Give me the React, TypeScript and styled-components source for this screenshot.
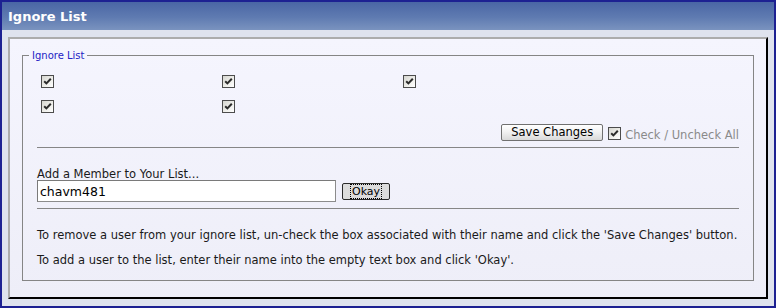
import * as React from 'react';
import styled, { createGlobalStyle } from 'styled-components';

const GlobalStyle = createGlobalStyle`
    html, body {
        margin: 0;
        padding: 0;
        background: #dfe3ee;
    }
    * {
        box-sizing: border-box;
    }
`;

const Frame = styled.div`
    width: 776px;
    height: 308px;
    border: 2px solid #1d2192;
    background: #dfe3ee;
    display: flex;
    flex-direction: column;
    font-family: "DejaVu Sans", Verdana, sans-serif;
    overflow: hidden;
`;

const Header = styled.div`
    height: 28px;
    flex: none;
    padding: 7px 6px 0;
    background: linear-gradient(to bottom, #4a66a5 0%, #5f7bb1 55%, #7a93bf 100%);
    color: #ffffff;
    font-weight: bold;
    font-size: 13px;
    line-height: 15px;
`;

const Body = styled.div`
    padding: 7px 6px;
    flex: 1;
    display: flex;
    min-height: 0;
`;

const Panel = styled.div`
    flex: 1;
    min-width: 0;
    border-style: solid;
    border-width: 2px;
    border-color: #acacac #000000 #000000 #acacac;
    background: linear-gradient(to bottom, #f5f5fe 0%, #eeeef8 100%);
    padding: 10px 12px 17px;
`;

const Fieldset = styled.fieldset`
    margin: 0;
    min-width: 0;
    border: 1px solid #858585;
    padding: 0 6px 13px;
`;

const Legend = styled.legend`
    padding: 0 3px;
    font-size: 10px;
    line-height: 13px;
    color: #2323c4;
`;

const Content = styled.div`
    margin: 0 8px;
    display: flex;
    flex-direction: column;
`;

const CheckGrid = styled.div`
    margin: 13px 0 0 4px;
    display: grid;
    grid-template-columns: repeat(3, 181px);
    grid-auto-rows: 13px;
    row-gap: 12px;
`;

const Box = styled.span`
    display: inline-flex;
    align-items: center;
    justify-content: center;
    width: 13px;
    height: 13px;
    border: 1px solid #4c4c4c;
    background: linear-gradient(135deg, #d6d6d0 0%, #f0f0ec 60%, #ffffff 100%);
    flex: none;
`;

const Actions = styled.div`
    margin-top: 11px;
    display: flex;
    justify-content: flex-end;
    align-items: flex-end;
    height: 17px;
`;

const Button = styled.button<{ $focused?: boolean }>`
    height: 17px;
    padding: 0 ${(p) => (p.$focused ? '7px' : '9px')};
    font-family: "DejaVu Sans", Verdana, sans-serif;
    font-size: ${(p) => (p.$focused ? '11px' : '11.5px')};
    line-height: 15px;
    color: #000;
    border: 1px solid ${(p) => (p.$focused ? '#2a2a2a' : '#707070')};
    border-radius: 2px;
    background: ${(p) => (p.$focused
        ? '#dcdcdc'
        : 'linear-gradient(to bottom, #ffffff 0%, #f2f2f2 45%, #d9d9d9 100%)')};
    display: flex;
    align-items: center;
    justify-content: center;
`;

const FocusRing = styled.span`
    border: 1px dotted #000;
    padding: 0 1px;
    line-height: 13px;
`;

const AllToggle = styled.div`
    display: flex;
    align-items: flex-end;
    margin-left: 5px;
    gap: 4px;
    padding-bottom: 1px;
`;

const AllLabel = styled.span`
    font-size: 11.5px;
    line-height: 13px;
    color: #8a8a8a;
    margin-bottom: -2px;
`;

const Rule = styled.div<{ $top: number }>`
    margin-top: ${(p) => p.$top}px;
    border-top: 1px solid #868686;
`;

const FieldLabel = styled.div`
    margin-top: 20px;
    font-size: 11.5px;
    line-height: 12px;
    color: #1a1a1a;
`;

const InputRow = styled.div`
    display: flex;
    align-items: center;
    gap: 6px;
`;

const TextInput = styled.input`
    width: 299px;
    height: 22px;
    border: 1px solid #8c8c8c;
    border-top-color: #7a7a7a;
    border-left-color: #7a7a7a;
    padding: 0 2px;
    font-family: "DejaVu Sans", Verdana, sans-serif;
    font-size: 12.5px;
    color: #000;
    background: #fff;
    outline: none;
`;

const Note = styled.p<{ $top: number }>`
    margin: ${(p) => p.$top}px 0 0;
    font-size: 11.5px;
    line-height: 14px;
    color: #1a1a1a;
    white-space: nowrap;
`;

const Check = () => (
    <Box>
        <svg width="9" height="9" viewBox="0 0 9 9">
            <polyline points="1.2,4.2 3.4,6.4 7.8,1.8" fill="none" stroke="#2b2b2b" strokeWidth="2" />
        </svg>
    </Box>
);

const ignored = [0, 1, 2, 3, 4];

const App = () => {
    return (
        <>
            <GlobalStyle />
            <Frame>
                <Header>Ignore List</Header>
                <Body>
                    <Panel>
                        <Fieldset>
                            <Legend>Ignore List</Legend>
                            <Content>
                                <CheckGrid>
                                    {ignored.map((val: number) => (
                                        <Check key={val} />
                                    ))}
                                </CheckGrid>
                                <Actions>
                                    <Button>Save Changes</Button>
                                    <AllToggle>
                                        <Check />
                                        <AllLabel>Check / Uncheck All</AllLabel>
                                    </AllToggle>
                                </Actions>
                                <Rule $top={6} />
                                <FieldLabel>Add a Member to Your List...</FieldLabel>
                                <InputRow>
                                    <TextInput defaultValue="chavm481" />
                                    <Button $focused>
                                        <FocusRing>Okay</FocusRing>
                                    </Button>
                                </InputRow>
                                <Rule $top={6} />
                                <Note $top={19}>
                                    To remove a user from your ignore list, un-check the box associated with their name and click the 'Save Changes' button.
                                </Note>
                                <Note $top={11}>
                                    To add a user to the list, enter their name into the empty text box and click 'Okay'.
                                </Note>
                            </Content>
                        </Fieldset>
                    </Panel>
                </Body>
            </Frame>
        </>
    );
};

export default App;
